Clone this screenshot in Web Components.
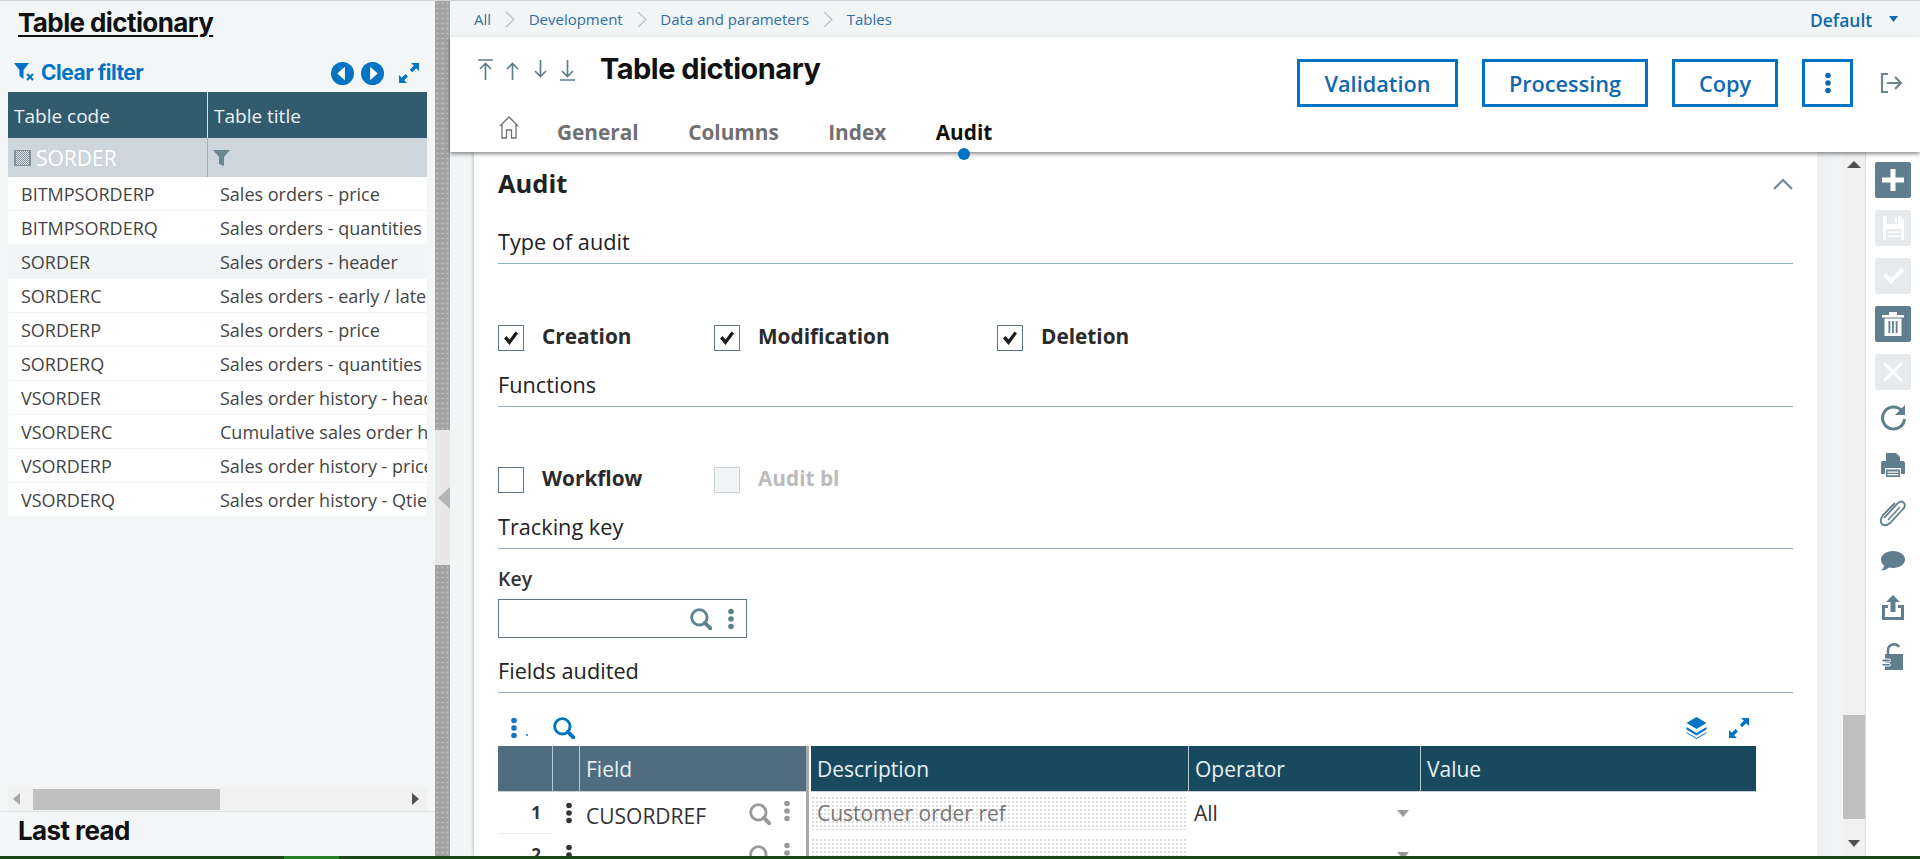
<!DOCTYPE html>
<html lang="en"><head><meta charset="utf-8"><title>Table dictionary</title>
<style>
html,body{margin:0;padding:0;height:859px;overflow:hidden;background:#f2f5f6;font-family:"Open Sans",sans-serif}
</style></head><body>
<x-app></x-app>
<script>
const I={
plus:'<path d="M15.500 7h5v8.500h8.500v5h-8.500V29h-5v-8.500H7v-5h8.500z" fill="#fff"/>',
save:'<path d="M8 6h17l4 4v20H8z" fill="#fff"/><path d="M12 6h11v8H12z" fill="#e6eaec"/><path d="M20 7.500h2v5h-2z" fill="#fff"/><path d="M11 19h15v11H11z" fill="#e6eaec"/><path d="M12.500 21.500h12v1.500h-12zM12.500 25.500h12v1.500h-12z" fill="#fff"/>',
check:'<path d="M8 18l3-3 5 5 10-10 3 3-13 13z" fill="#fff"/>',
trash:'<path d="M7 9h22v2.500H7zM14 6h8v3h-8z" fill="#fff"/><path d="M9.500 12.500h17V30h-17z" fill="#fff"/><path d="M13.500 15h1.800v12h-1.800zM17.100 15h1.800v12h-1.800zM20.700 15h1.800v12h-1.800z" fill="#5f7f8f"/>',
x:'<path d="M9 9l18 18M27 9L9 27" stroke="#fff" stroke-width="3" fill="none"/>',
refresh:'<path d="M27 12a11 11 0 1 0 2.500 8" fill="none" stroke="#5f7f8f" stroke-width="3"/><path d="M30 6v10H20z" fill="#5f7f8f"/>',
print:'<path d="M11 6h10l4 4v5H11z" fill="#5f7f8f"/><path d="M6 16q0-2 2-2h20q2 0 2 2v11h-4v-6H10v6H6z" fill="#5f7f8f"/><path d="M11 22.500h14V30H11z" fill="#5f7f8f"/><path d="M12.500 24.500h11v1.200h-11zM12.500 27h11v1.200h-11z" fill="#fff"/>',
clip:'<path d="M10 24L24 9q4-3 6 0t-1 6L16 29q-5 4-8 1t1-9L21 9" fill="none" stroke="#5f7f8f" stroke-width="1.800" transform="translate(-1 -1)"/><path d="M13 25L25 12" fill="none" stroke="#5f7f8f" stroke-width="1.500"/>',
comment:'<path d="M18 8c7 0 12 4 12 8.500S25 25 18 25c-1.500 0-3-.2-4-.5-2 2-5 3-8 3 2-1.500 3-3.500 3-5-2-1.500-3-3.500-3-6C6 12 11 8 18 8z" fill="#5f7f8f"/>',
share:'<path d="M18 4l7 7h-4.500v10h-5V11H11z" fill="#5f7f8f"/><path d="M7 14h6v3H10v9h16v-9h-3v-3h6v15H7z" fill="#5f7f8f"/>',
lock:'<path d="M13 15v-4a6 6 0 0 1 11-3" fill="none" stroke="#5f7f8f" stroke-width="2.500"/><path d="M10 15h18v16H10z" fill="#5f7f8f"/><path d="M7 20h7q1.500 0 1.500 1.500t-1.500 1.500H7zM7 24.500h7q1.500 0 1.500 1.200T14 27H7z" fill="#5f7f8f" stroke="#fff" stroke-width="1"/>',
search:c=>`<svg width="22" height="22" viewBox="1 1 20 20"><circle cx="9.500" cy="9.500" r="7" fill="none" stroke="${c}" stroke-width="2.600"/><path d="M14.500 14.500l5 5" stroke="${c}" stroke-width="3.600" stroke-linecap="round"/></svg>`,
dots:(c,h=22)=>`<svg width="8" height="${h}" viewBox="0 0 8 22"><circle cx="4" cy="3.500" r="2.800" fill="${c}"/><circle cx="4" cy="11" r="2.800" fill="${c}"/><circle cx="4" cy="18.500" r="2.800" fill="${c}"/></svg>`,
expand:(c,s=22)=>`<svg width="${s}" height="${s}" viewBox="0 0 22 22"><path d="M13 1h8v8l-2.800-2.800-4 4-2.400-2.400 4-4zM1 21v-8l2.800 2.800 3.700-3.700 2.400 2.400-3.700 3.700L9 21z" fill="${c}"/></svg>`
};
function def(name,html){customElements.define(name,class extends HTMLElement{constructor(){super();this.attachShadow({mode:'open'})}connectedCallback(){if(!this.shadowRoot.innerHTML)this.shadowRoot.innerHTML=typeof html==='function'?html(this):html}})}
const T='font-family:Inter,sans-serif;font-weight:700;letter-spacing:-.6px;color:#111;';

def('x-app',`<style>:host{display:flex;flex-direction:column;height:859px;overflow:hidden}
.top{height:1px;background:#cfd4d6;flex:none}.row{display:flex;height:855px;flex:none;overflow:hidden}
.bar{height:3px;flex:none;background:linear-gradient(90deg,#1a4a1a 0,#1a4a1a 284px,#258025 284px,#258025 339px,#1a4a1a 339px)}</style>
<div class="top"></div><div class="row"><x-left></x-left><x-split></x-split><x-main></x-main></div><div class="bar"></div>`);

def('x-left',`<style>:host{display:flex;flex-direction:column;width:435px;flex:none;background:#f3f6f7}
h1{margin:0;height:44px;line-height:44px;padding-left:18px;font-size:26px;${T}text-decoration:underline;text-decoration-thickness:2px;text-underline-offset:3px}
.tb{height:47px;box-sizing:border-box;padding-top:7px;display:flex;align-items:center;padding-left:14px;flex:none}
.cf{margin-left:6px;font:700 21px Inter,sans-serif;letter-spacing:-.5px;color:#0073c2;flex:1}
.nav{display:flex;gap:7px;margin-right:14px;margin-top:2px}.ex{margin-right:15px;margin-top:2px;height:22px}
x-lefttable{flex:1;min-height:0}
.foot{border-top:1px solid #dfe3e5;height:44px;line-height:38px;padding-left:18px;font-size:26px;${T}flex:none}</style>
<h1>Table dictionary</h1>
<div class="tb"><svg width="21" height="20" viewBox="0 0 21 20"><path d="M0 1h15l-5.500 7v9l-4-3V8z" fill="#0073c2"/><path d="M13 12l6 6M19 12l-6 6" stroke="#0073c2" stroke-width="2"/></svg><span class="cf">Clear filter</span>
<span class="nav"><svg width="23" height="23" viewBox="0 0 24 24"><circle cx="12" cy="12" r="12" fill="#0073c2"/><path d="M14.500 5v14l-8-7z" fill="#fff"/></svg><svg width="23" height="23" viewBox="0 0 24 24"><circle cx="12" cy="12" r="12" fill="#0073c2"/><path d="M9.500 5v14l8-7z" fill="#fff"/></svg></span>
<span class="ex">${I.expand('#0073c2')}</span></div>
<x-lefttable></x-lefttable>
<div class="foot">Last read</div>`);

def('x-lefttable',()=>{
const rows=[['BITMPSORDERP','Sales orders - price'],['BITMPSORDERQ','Sales orders - quantities'],['SORDER','Sales orders - header',1],['SORDERC','Sales orders - early / late'],['SORDERP','Sales orders - price'],['SORDERQ','Sales orders - quantities'],['VSORDER','Sales order history - header'],['VSORDERC','Cumulative sales order history'],['VSORDERP','Sales order history - price'],['VSORDERQ','Sales order history - Qties']];
return `<style>:host{display:flex;flex-direction:column;margin:0 8px;width:419px;overflow:hidden}
.g{display:grid;grid-template-columns:199px 220px;flex:1;align-content:start;grid-auto-rows:34px;overflow:hidden}
.h{height:46px;background:#335b6e;color:#eef3f5;font-size:19px;line-height:48px;padding-left:6px;box-sizing:border-box}
.h+.h{border-left:1px solid #dbe3e7}
.f{height:39px;background:#ccd6db;display:flex;align-items:center}
.f1{color:#fff;font-size:21px;padding-left:6px;gap:5px;box-sizing:border-box}.f2{padding-left:5px;border-left:1px solid #9fb0b9;box-sizing:border-box}
.c{height:34px;line-height:34px;font-size:18px;color:#444;white-space:nowrap;overflow:hidden;background:#fff;border-bottom:1px solid #f2f5f6;box-sizing:border-box}
.c1{padding-left:13px}.c2{padding-left:13px}.a{background:#f2f5f6;color:#444}
.hd{display:grid;grid-template-columns:199px 220px;grid-auto-rows:min-content;flex:none}
.sb{height:24px;flex:none;background:#f1f1f1;display:flex;align-items:center;box-sizing:border-box;padding:0 5px}
.th{width:187px;height:21px;background:#c0c0c0;margin-left:12px;margin-top:1px}.sp{flex:1}</style>
<div class="hd"><div class="h">Table code</div><div class="h">Table title</div>
<div class="f f1"><svg width="17" height="16" viewBox="0 0 17 16"><defs><pattern id="p" width="2" height="2" patternUnits="userSpaceOnUse"><rect width="2" height="2" fill="#dfe5e8"/><rect width="1" height="1" fill="#7d929d"/><rect x="1" y="1" width="1" height="1" fill="#7d929d"/></pattern></defs><rect width="17" height="16" fill="#7d929d"/><rect x="2" y="1" width="13" height="14" fill="url(#p)"/></svg><span>SORDER</span></div>
<div class="f f2"><svg width="17" height="18" viewBox="0 0 17 18"><path d="M0 1h17l-6 7v9l-5-2V8z" fill="#6d8694"/></svg></div></div>
<div class="g">${rows.map(r=>`<div class="c c1 ${r[2]?'a':''}">${r[0]}</div><div class="c c2 ${r[2]?'a':''}">${r[1]}</div>`).join('')}</div>
<div class="sb"><svg width="8" height="12" viewBox="0 0 8 12"><path d="M7 0v12L0 6z" fill="#a8a8a8"/></svg><div class="th"></div><div class="sp"></div><svg width="8" height="12" viewBox="0 0 8 12" style="margin-right:3px"><path d="M1 0v12l7-6z" fill="#505050"/></svg></div>`});

def('x-split',`<style>:host{display:flex;flex-direction:column;width:15px;flex:none}
.d{background-color:#a2a2a2;background-image:radial-gradient(#c2c2c2 .8px,transparent 1.2px);background-size:5px 5px}
.a{height:429px}.b{flex:1}.m{height:135px;background:#e9e7e6;display:flex;align-items:center;justify-content:flex-end}</style>
<div class="d a"></div><div class="m"><svg width="12" height="22" viewBox="0 0 12 22"><path d="M12 0v22L0 11z" fill="#b5b5b5"/></svg></div><div class="d b"></div>`);

def('x-main',`<style>:host{flex:1;display:flex;flex-direction:column;min-width:0}
.b{flex:1;display:flex;min-height:0;overflow:hidden}.gut{width:24px;flex:none}</style>
<x-crumbs></x-crumbs><x-head></x-head>
<div class="b"><div class="gut"></div><x-card></x-card><x-vscroll></x-vscroll><x-side></x-side></div>`);

def('x-crumbs',()=>{const ch='<svg width="10" height="17" viewBox="0 0 10 17"><path d="M1 1l8 7.500-8 7.500" fill="none" stroke="#b9c3c7" stroke-width="1.300"/></svg>';
return `<style>:host{display:flex;align-items:center;height:36px;flex:none;padding-left:24px;gap:13.800px;font-size:15px;color:#2f6ea5;background:#f2f5f6}
.d{margin-left:auto;font-weight:600;font-size:17.500px;color:#0f69b0;margin:2px 3px 0 auto}.t{margin-right:22px}</style>
<span>All</span>${ch}<span>Development</span>${ch}<span>Data and parameters</span>${ch}<span>Tables</span><span class="d">Default</span><svg class="t" width="9" height="6" viewBox="0 0 9 6"><path d="M0 0h9L4.500 6z" fill="#0f69b0"/></svg>`});

def('x-head',()=>`<style>:host{display:block;height:115px;flex:none;background:#fff;box-shadow:0 2px 4px rgba(0,0,0,.45);position:relative;z-index:2}
.r{display:flex;align-items:center;height:48px;padding:22px 16px 0 28px}
.ar{display:flex;gap:12.300px;width:122px;margin-bottom:26px}
h2{margin:0 0 30px;font-size:29px;${T}letter-spacing:-.5px;flex:1}
x-btn+x-btn{margin-left:24px}.lo{margin-left:27px;height:24px}</style>
<div class="r"><span class="ar">
<svg width="15" height="22" viewBox="0 0 15 22"><path d="M0 1h15M7.500 21V5M2 10l5.500-5.500L13 10" fill="none" stroke="#5c7f8a" stroke-width="1.700"/></svg>
<svg width="15" height="22" viewBox="0 0 15 22"><path d="M7.500 21V5M2 10l5.500-5.500L13 10" fill="none" stroke="#5c7f8a" stroke-width="1.700"/></svg>
<svg width="15" height="22" viewBox="0 0 15 22"><path d="M7.500 1v16M2 12l5.500 5.500L13 12" fill="none" stroke="#5c7f8a" stroke-width="1.700"/></svg>
<svg width="15" height="22" viewBox="0 0 15 22"><path d="M7.500 1v16M2 12l5.500 5.500L13 12M0 21h15" fill="none" stroke="#5c7f8a" stroke-width="1.700"/></svg>
</span><h2>Table dictionary</h2>
<x-btn style="width:161px">Validation</x-btn><x-btn style="width:166px">Processing</x-btn><x-btn style="width:106px">Copy</x-btn><x-btn style="width:51px">${I.dots('#0f69b0')}</x-btn>
<span class="lo"><svg width="24" height="24" viewBox="0 0 24 24"><path d="M8 3H2v18h6" fill="none" stroke="#6f858f" stroke-width="2.200"/><path d="M7 12h14M15 6l6 6-6 6" fill="none" stroke="#6f858f" stroke-width="2.200"/></svg></span></div>
<x-tabs></x-tabs>`);

def('x-btn',`<style>:host{display:flex;align-items:center;justify-content:center;height:48px;box-sizing:border-box;border:3px solid #0073c2;color:#0f69b0;font-weight:600;font-size:21.700px;flex:none}</style><slot></slot>`);

def('x-tabs',`<style>:host{display:flex;align-items:center;height:45px;box-sizing:border-box;padding:5px 0 0 49px;font-size:20.800px;font-weight:700;color:#707070;gap:49.500px;position:relative}
svg{margin-right:-11.500px;margin-top:-9px}
.on{color:#111;position:relative}.on::after{content:"";position:absolute;left:50%;margin-left:-6px;top:30px;width:12px;height:12px;border-radius:50%;background:#0073c2}</style>
<svg width="20" height="23" viewBox="0 0 20 23"><path d="M1 10L10 1l9 9M3 8.500V22h4.500v-8h5v8H17V8.500" fill="none" stroke="#707070" stroke-width="1.300"/></svg>
<span>General</span><span>Columns</span><span>Index</span><span class="on">Audit</span>`);

def('x-section',`<style>:host{display:block;font-size:21.700px;line-height:26px;color:#222;padding-bottom:8px;border-bottom:1px solid #8fb3c6}</style><slot></slot>`);

def('x-check',t=>{const c=t.hasAttribute('checked'),d=t.hasAttribute('disabled');
return `<style>:host{display:inline-flex;align-items:center;font-size:20.800px;font-weight:700;color:${d?'#bbb':'#2b2b2b'}}
.b{width:26px;height:26px;box-sizing:border-box;border:1px solid ${d?'#c9d3d7':'#5f7682'};background:${d?'#f2f5f6':'#fff'};display:flex;align-items:center;justify-content:center;margin-right:18px}
.l{margin-top:-4px}</style>
<span class="b">${c?'<svg width="16" height="16" viewBox="0 0 16 16"><path d="M1 8.500l2.500-2.500 3 3.500L12.500 1.500l2.500 2L6.500 15z" fill="#1c1c1c"/></svg>':''}</span><span class="l"><slot></slot></span>`});

def('x-card',`<style>:host{display:block;width:1343px;flex:none;box-sizing:border-box;background:#fff;padding:0 24px;overflow:hidden;box-shadow:-1px 0 3px rgba(0,0,0,.2)}
.ah{display:flex;align-items:center;justify-content:space-between;padding-top:14px;height:34px;font-size:25.500px;font-weight:700;color:#222}
.ah svg{margin-right:0;margin-top:2px}
.cks{display:flex;height:26px}
.s1{margin-top:29px}.s2{margin-top:21px}.k{margin-top:18px;font-size:19.500px;font-weight:600;line-height:24px;color:#333}
.in{margin-top:8px;width:249px;height:39px;box-sizing:border-box;border:1px solid #5f7682;display:flex;align-items:center;justify-content:flex-end;gap:15px;padding-right:11px}
.fa{margin-top:20px}.cks1{margin-top:61px}.cks2{margin-top:60px}
.w1{width:216px}.w2{width:283px}</style>
<div class="ah"><span>Audit</span><svg width="20" height="12" viewBox="0 0 20 12"><path d="M1 11l9-9 9 9" fill="none" stroke="#6f858f" stroke-width="2"/></svg></div>
<x-section class="s1">Type of audit</x-section>
<div class="cks cks1"><x-check class="w1" checked>Creation</x-check><x-check class="w2" checked>Modification</x-check><x-check checked>Deletion</x-check></div>
<x-section class="s2">Functions</x-section>
<div class="cks cks2"><x-check class="w1">Workflow</x-check><x-check disabled>Audit bl</x-check></div>
<x-section class="s2">Tracking key</x-section>
<div class="k">Key</div>
<div class="in">${I.search('#5f8291')}${I.dots('#5f7f8f')}</div>
<x-section class="fa">Fields audited</x-section>
<x-grid></x-grid>`);

def('x-grid',()=>`<style>:host{display:block;width:1258px}
.tb{height:53px;box-sizing:border-box;padding-top:24px;display:flex;align-items:flex-start;padding-left:12px}
.tn{margin:17px 0 0 8px}.sr{margin-left:25px}.sp{flex:1}.ly{margin-right:19px}.ex{margin-right:6px}
.g{display:grid;grid-template-columns:54px 27px 227px 5px 377px 232px 336px}
.h{height:46px;box-sizing:border-box;line-height:47px;font-size:21px;color:#e8f0f3;padding-left:6px;background:#19495f;border-left:1px solid #b9c9d1;border-bottom:1px solid #c5cfd4}
.f{background:#4f6d7e}.n1{border-left:0}.sep{background:#fff;border:0;padding:0;border-left:3px solid #a9a9a9}.d1{border-left:0}
.c{height:42px;position:relative;font-size:21px;display:flex;align-items:center;box-sizing:border-box}
.no{justify-content:flex-end;padding-right:11px;font-size:17px;font-weight:700;color:#333;border-bottom:1px solid #eee}
.dt{justify-content:center;padding-left:6px}.fl{padding-left:7px;color:#333;justify-content:space-between;padding-right:15px;padding-top:5px}
.fl span{display:flex;gap:12px;align-items:flex-start;margin-top:-6px}
.fl span svg:first-child{margin-top:3px}
.sepc{background:#a9a9a9;border-right:2px solid #fff}
.de{color:#777;background-image:radial-gradient(#dcdcdc .8px,transparent 1px);background-size:4px 4px;margin:4px 2px 4px 0;padding:0 0 0 6px;height:34px}
.op{padding-left:6px;color:#333;justify-content:space-between;padding-right:11px}</style>
<div class="tb"><span>${I.dots('#0f74c4')}</span><svg class="tn" width="2" height="2" viewBox="0 0 2 2"><circle cx="1" cy="1" r="1" fill="#0f74c4"/></svg><span class="sr">${I.search('#0073c2')}</span><span class="sp"></span>
<svg class="ly" width="25" height="22" viewBox="0 0 24 22"><path d="M12 0l10 6-10 6-10-6z" fill="#0073c2"/><path d="M2 10l10 6 10-6v2.500l-10 6-10-6zM2 15l10 6 10-6v1l-10 6-10-6z" fill="#0073c2"/></svg><span class="ex">${I.expand('#0073c2')}</span></div>
<div class="g">
<div class="h f n1"></div><div class="h f"></div><div class="h f">Field</div><div class="h sep"></div><div class="h d1">Description</div><div class="h">Operator</div><div class="h">Value</div>
<div class="c no">1</div><div class="c dt">${I.dots('#333')}</div><div class="c fl">CUSORDREF<span>${I.search('#999')}${I.dots('#999')}</span></div><div class="c sepc"></div><div class="c de">Customer order ref</div><div class="c op">All<svg width="12" height="7" viewBox="0 0 14 9" preserveAspectRatio="none"><path d="M0 0h14L7 9z" fill="#999"/></svg></div><div class="c"></div>
<div class="c no">2</div><div class="c dt">${I.dots('#333')}</div><div class="c fl"><i></i><span>${I.search('#999')}${I.dots('#999')}</span></div><div class="c sepc"></div><div class="c de"></div><div class="c op"><i></i><svg width="12" height="7" viewBox="0 0 14 9" preserveAspectRatio="none"><path d="M0 0h14L7 9z" fill="#999"/></svg></div><div class="c"></div>
</div>`);

def('x-vscroll',`<style>:host{display:flex;width:49px;flex:none;background:linear-gradient(90deg,#eef1f2,#f2f5f6 26px,#f1f1f1 26px);border-right:1px solid #d8dcde;box-sizing:border-box;flex-direction:column;align-items:flex-end;padding-right:0}
.t{width:22px;display:flex;justify-content:center;flex:none}.u{margin-top:9px}.th{width:22px;height:104px;background:#c0c0c0;margin-top:547px;flex:none}.d{margin-top:21px}</style>
<div class="t u"><svg width="14" height="7" viewBox="0 0 14 7"><path d="M0 7h14L7 0z" fill="#505050"/></svg></div><div class="th"></div><div class="t d"><svg width="12" height="7" viewBox="0 0 12 7"><path d="M0 0h12L6 7z" fill="#505050"/></svg></div>`);

def('x-side',()=>{const b=(k,cl)=>`<div class="i ${cl} ${k}"><svg width="36" height="36" viewBox="0 0 36 36">${I[k]}</svg></div>`;
return `<style>:host{display:flex;flex-direction:column;width:54px;flex:none;background:#fff;padding:10px 0 0 9px;box-sizing:border-box;gap:12px}
.i{width:36px;height:36px;border-radius:2px}.on{background:#5f7f8f}.off{background:#e6eaec}.refresh{margin-top:-3px}</style>
${b('plus','on')}${b('save','off')}${b('check','off')}${b('trash','on')}${b('x','off')}${['refresh','print','clip','comment','share','lock'].map(k=>b(k,'')).join('')}`});
</script></body></html>
